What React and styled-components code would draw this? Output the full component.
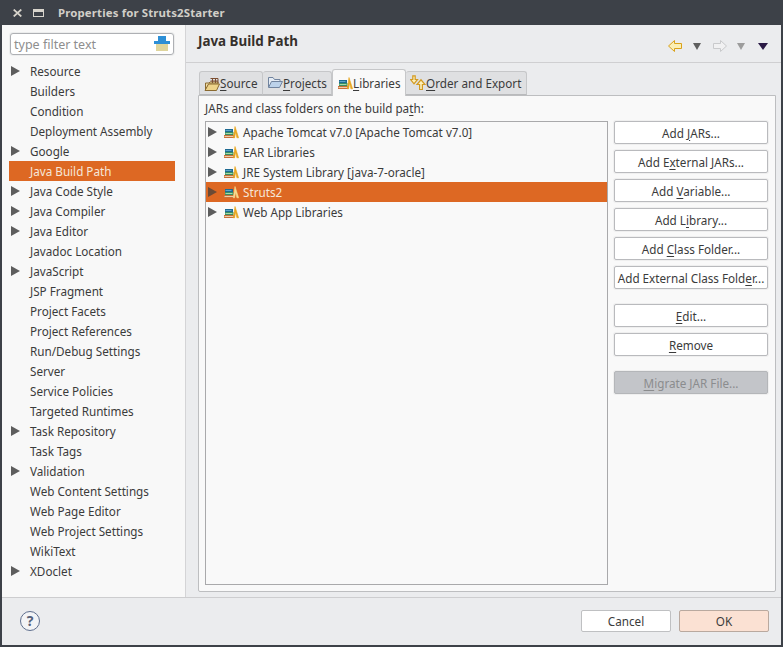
import React from 'react';
import styled, { createGlobalStyle } from 'styled-components';

const Global = createGlobalStyle`
  html, body { margin: 0; padding: 0; background: #3d4148; }
  * { box-sizing: border-box; }
  #root { width: 783px; height: 647px; overflow: hidden; }
`;
const Window = styled.div`
  width: 783px; height: 647px; background: #3d4148; display: flex; flex-direction: column;
  font-family: "Noto Sans", "Open Sans", sans-serif; font-size: 11.7px; color: #3c3c3c;
`;
const TitleBar = styled.div`
  height: 25px; display: flex; align-items: center; flex: none;
`;
const TitleControls = styled.div`
  display: flex; align-items: center; gap: 11px; padding-left: 13px; width: 58px;
`;
const Title = styled.div`
  font-weight: 700; font-size: 11.4px; letter-spacing: .15px; color: #d2cfc8;
`;
const Client = styled.div`
  flex: 1; margin: 0 2px 2px; background: #ebecee; display: flex; flex-direction: column; min-height: 0;
`;
const Body = styled.div`
  flex: 1; display: flex; min-height: 0; border-bottom: 1px solid #cdcdcf;
`;
const Sidebar = styled.div`
  width: 184px; background: #f8f8f8; border-right: 1px solid #d4d4d6; padding: 8px 0 0 7px; flex: none;
`;
const Filter = styled.div`
  width: 164px; height: 22px; margin-left: 1px; background: #fff; border: 1px solid #aeb0b4; border-radius: 3px;
  box-shadow: 0 0 0 1px #eceded; display: flex; align-items: center; justify-content: space-between;
  padding: 0 3px; color: #8e8e8e; font-size: 12.5px;
`;
const Tree = styled.div`
  margin-top: 6px; display: flex; flex-direction: column; width: 166px;
`;
const Row = styled.div`
  height: 20px; display: flex; align-items: center; padding-left: 21px;
  background: ${p => (p.$sel ? '#dd6823' : 'transparent')};
  color: ${p => (p.$sel ? '#f6e7da' : '#3b3b3b')}; white-space: nowrap;
  position: relative; flex: none;
`;
const Arrow = styled.span`
  width: 0; height: 0; border-left: 9px solid ${p => (p.$sel ? '#6b4a35' : '#5d5d5d')};
  border-top: 5px solid transparent; border-bottom: 5px solid transparent;
  position: absolute; left: ${p => p.$left}px; top: 5px;
`;
const Main = styled.div`
  flex: 1; display: flex; flex-direction: column; min-width: 0;
`;
const Header = styled.div`
  height: 38px; flex: none; border-bottom: 1px solid #cfcfd1; display: flex; align-items: center;
  justify-content: space-between; padding: 0 13px 6px 12px;
`;
const Heading = styled.div`
  font-weight: 700; font-size: 13.4px; color: #35302c; margin-top: 1px;
`;
const Toolbar = styled.div`
  display: flex; align-items: center; margin-top: 11px;
`;
const Folder = styled.div`
  flex: 1; display: flex; flex-direction: column; padding: 6px 5px 5px 12px; min-height: 0;
`;
const TabStrip = styled.div`
  height: 26px; display: flex; align-items: flex-end; flex: none; position: relative; z-index: 1; padding-left: 1px;
`;
const Tab = styled.div`
  width: ${p => p.$w}px; height: ${p => (p.$active ? 27 : 24)}px; flex: none;
  background: ${p => (p.$active ? '#f9f9f9' : '#dfe0e2')};
  border: 1px solid #c6c7c9; border-bottom: ${p => (p.$active ? 'none' : '1px solid #b9babc')};
  border-left: ${p => (p.$first || p.$active ? '1px solid #c6c7c9' : 'none')};
  border-radius: 3px 3px 0 0; display: flex; align-items: center; padding-left: 4px;
  color: #3b3b3b; white-space: nowrap; margin-bottom: ${p => (p.$active ? -1 : 0)}px;
`;
const Panel = styled.div`
  flex: 1; background: #f9f9f9; border: 1px solid #bdbec0; border-radius: 0 0 2px 2px; padding: 5px 7px 6px 6px;
  display: flex; flex-direction: column; min-height: 0;
`;
const Label = styled.div`
  height: 20px; line-height: 15px; color: #3b3b3b; flex: none;
`;
const Columns = styled.div`
  flex: 1; display: flex; gap: 6px; min-height: 0;
`;
const List = styled.div`
  width: 403px; background: #f9f9f9; border: 1px solid #a9a9ab; display: flex; flex-direction: column; flex: none;
`;
const ListRow = styled(Row)`
  width: 100%; padding-left: 37px;
`;
const Buttons = styled.div`
  flex: 1; display: flex; flex-direction: column;
`;
const Button = styled.div`
  height: 23px; flex: none; background: ${p => (p.$disabled ? '#c3c5c9' : '#fff')};
  border: 1px solid ${p => (p.$disabled ? '#b4b6b9' : '#b9babd')}; border-radius: 2px;
  box-shadow: 0 0 0 1px #efefef; margin-top: ${p => p.$gap ?? 6}px;
  display: flex; align-items: center; justify-content: center; white-space: nowrap;
  color: ${p => (p.$disabled ? '#8b8c8e' : '#3b3b3b')};
`;
const Footer = styled.div`
  height: 47px; flex: none; display: flex; align-items: center; justify-content: space-between; padding: 0 12px 0 18px;
`;
const HelpCircle = styled.div`
  width: 20px; height: 20px; margin-top: -2px; border-radius: 50%; border: 1.5px solid #5f6f8e; color: #55617a; font-weight: 700; font-size: 14px;
  display: flex; align-items: center; justify-content: center; background: #f3f4f6;
`;
const FooterButtons = styled.div`
  display: flex; gap: 8px; margin-top: -1px;
`;
const DialogButton = styled.div`
  width: 90px; height: 22px; border-radius: 2px; display: flex; align-items: center; justify-content: center;
  background: ${p => (p.$primary ? '#fbe1d3' : '#fff')}; border: 1px solid ${p => (p.$primary ? '#b9a99f' : '#bfc0c2')}; color: #3b3b3b;
`;
const M = styled.span`
  text-decoration: underline; text-underline-offset: 2px;
`;
const Slot = styled.span`
  display: inline-flex; position: absolute; left: ${p => p.$left}px; top: 2px;
`;
const ToolSlot = styled.span`
  display: inline-flex; margin-left: ${p => p.$ml || 0}px;
`;

const LibIcon = ({ sel }) => (
  <svg width="16" height="16" viewBox="0 0 16 16">
    <rect x="1" y="11" width="10.5" height="3" fill="#c8703a" />
    <rect x="1.5" y="12" width="9" height="1" fill="#efcfa9" />
    <rect x="2" y="8" width="8.5" height="3" fill="#3a8f60" />
    <rect x="2.5" y="9" width="7" height="1" fill="#a6d8ae" />
    <rect x="2" y="5" width="8" height="3" fill="#1f6a92" />
    <rect x="2.5" y="6" width="6" height="1" fill="#5ea6c8" />
    <path d="M12 2.5 L15.6 13.8 H13.9 L12.6 8 L11.6 13.8 H10.3 Z" fill={sel ? '#f6dd90' : '#e8a61e'} stroke={sel ? '#f6dd90' : '#e8a61e'} strokeWidth=".6" />
  </svg>
);
const SourceIcon = () => (
  <svg width="16" height="16" viewBox="0 0 16 16">
    <path d="M1.5 8 H5 L6 7 H14 V9 H5 L1.5 15 Z" fill="#f3e0a8" stroke="#8a6a30" />
    <path d="M1 15.5 L4.5 9 H15.5 L12.5 15.5 Z" fill="#eed38a" stroke="#8a6a30" />
    <path d="M8.5 3 V8 M11.5 3 V8 M6.5 3.5 H14 V8 M6.5 6 H14" stroke="#7c4f32" fill="none" />
  </svg>
);
const ProjectIcon = () => (
  <svg width="16" height="16" viewBox="0 0 16 16">
    <path d="M1.5 12 V2.5 H6 L7.5 4.5 H13 V6" fill="#e4ebf4" stroke="#71849f" />
    <path d="M1.5 12.5 L4.5 6.5 H15.5 L12.5 12.5 Z" fill="#bcd2ea" stroke="#71849f" />
  </svg>
);
const OrderIcon = () => (
  <svg width="16" height="16" viewBox="0 0 16 16">
    <path d="M2.8 .8 H5.2 V4.5 H7.5 L4 8.8 L.5 4.5 H2.8 Z" fill="#fdf0bb" stroke="#d29a22" strokeWidth="1.2" />
    <path d="M9.6 14.5 H12.4 V9.5 H15 L11 4.8 L7 9.5 H9.6 Z" fill="#fdf0bb" stroke="#d29a22" strokeWidth="1.2" />
  </svg>
);
const NavIcon = ({ off }) => (
  <svg width="16" height="14" viewBox="0 0 16 14">
    <path d={off ? 'M1.5 4.5 H8.5 V1.5 L14.5 7 L8.5 12.5 V9.5 H1.5 Z' : 'M14.5 4.5 H7.5 V1.5 L1.5 7 L7.5 12.5 V9.5 H14.5 Z'}
      fill={off ? '#f1f1f2' : '#fbefb5'} stroke={off ? '#c9cacc' : '#d9a21b'} />
  </svg>
);
const DropIcon = ({ color, w = 8 }) => (
  <svg width={w} height="8" viewBox={`0 0 ${w} 8`}>
    <path d={`M0 1 H${w} L${w / 2} 8 Z`} fill={color} />
  </svg>
);
const BrushIcon = () => (
  <svg width="16" height="16" viewBox="0 0 16 16">
    <rect x="4" y="0" width="8" height="5" fill="#2d8fd6" />
    <rect x="0" y="5" width="16" height="3" fill="#2d8fd6" />
    <rect x="2" y="8" width="12" height="7" fill="#dfd59c" />
  </svg>
);

const items = [
  ['Resource', 1], ['Builders'], ['Condition'], ['Deployment Assembly'], ['Google', 1], ['Java Build Path', 0, 1],
  ['Java Code Style', 1], ['Java Compiler', 1], ['Java Editor', 1], ['Javadoc Location'], ['JavaScript', 1],
  ['JSP Fragment'], ['Project Facets'], ['Project References'], ['Run/Debug Settings'], ['Server'],
  ['Service Policies'], ['Targeted Runtimes'], ['Task Repository', 1], ['Task Tags'], ['Validation', 1],
  ['Web Content Settings'], ['Web Page Editor'], ['Web Project Settings'], ['WikiText'], ['XDoclet', 1],
];
const libs = [
  'Apache Tomcat v7.0 [Apache Tomcat v7.0]', 'EAR Libraries', 'JRE System Library [java-7-oracle]', 'Struts2', 'Web App Libraries',
];

export default function App() {
  return (
    <Window>
      <Global />
      <TitleBar>
        <TitleControls>
          <svg width="9" height="8" viewBox="0 0 9 8"><path d="M.7 .5 L8.3 7.5 M8.3 .5 L.7 7.5" stroke="#d8d4cc" strokeWidth="1.7" /></svg>
          <svg width="11" height="8" viewBox="0 0 11 8"><path d="M0 0 H11 V8 H0 Z M1 3 V7 H10 V3 Z" fill="#d8d4cc" fillRule="evenodd" /></svg>
        </TitleControls>
        <Title>Properties for Struts2Starter</Title>
      </TitleBar>
      <Client>
        <Body>
          <Sidebar>
            <Filter>
              type filter text
              <BrushIcon />
            </Filter>
            <Tree>
              {items.map(([name, arrow, sel]) => (
                <Row key={name} $sel={sel}>
                  {arrow ? <Arrow $left={2} /> : null}
                  {name}
                </Row>
              ))}
            </Tree>
          </Sidebar>
          <Main>
            <Header>
              <Heading>Java Build Path</Heading>
              <Toolbar>
                <NavIcon />
                <ToolSlot $ml={10}><DropIcon color="#5f5f5f" /></ToolSlot>
                <ToolSlot $ml={11}><NavIcon off /></ToolSlot>
                <ToolSlot $ml={9}><DropIcon color="#9c9c9c" /></ToolSlot>
                <ToolSlot $ml={13}><DropIcon color="#2a1a45" w={10} /></ToolSlot>
              </Toolbar>
            </Header>
            <Folder>
              <TabStrip>
                <Tab $w={64} $first><SourceIcon /><span><M>S</M>ource</span></Tab>
                <Tab $w={69}><ProjectIcon /><span><M>P</M>rojects</span></Tab>
                <Tab $w={74} $active><LibIcon /><span><M>L</M>ibraries</span></Tab>
                <Tab $w={121}><OrderIcon /><span><M>O</M>rder and Export</span></Tab>
              </TabStrip>
              <Panel>
                <Label>JARs and class folders on the build pa<M>t</M>h:</Label>
                <Columns>
                  <List>
                    {libs.map((n, i) => (
                      <ListRow key={n} $sel={i === 3}>
                        <Arrow $left={2} $sel={i === 3} />
                        <Slot $left={17}><LibIcon sel={i === 3} /></Slot>
                        {n}
                      </ListRow>
                    ))}
                  </List>
                  <Buttons>
                    <Button $gap={0}><span>Add <M>J</M>ARs...</span></Button>
                    <Button><span>Add E<M>x</M>ternal JARs...</span></Button>
                    <Button><span>Add <M>V</M>ariable...</span></Button>
                    <Button><span>Add L<M>i</M>brary...</span></Button>
                    <Button><span>Add <M>C</M>lass Folder...</span></Button>
                    <Button><span>Add External Class Fold<M>e</M>r...</span></Button>
                    <Button $gap={15}><span><M>E</M>dit...</span></Button>
                    <Button><span><M>R</M>emove</span></Button>
                    <Button $gap={15} $disabled><span><M>M</M>igrate JAR File...</span></Button>
                  </Buttons>
                </Columns>
              </Panel>
            </Folder>
          </Main>
        </Body>
        <Footer>
          <HelpCircle>?</HelpCircle>
          <FooterButtons>
            <DialogButton>Cancel</DialogButton>
            <DialogButton $primary>OK</DialogButton>
          </FooterButtons>
        </Footer>
      </Client>
    </Window>
  );
}
